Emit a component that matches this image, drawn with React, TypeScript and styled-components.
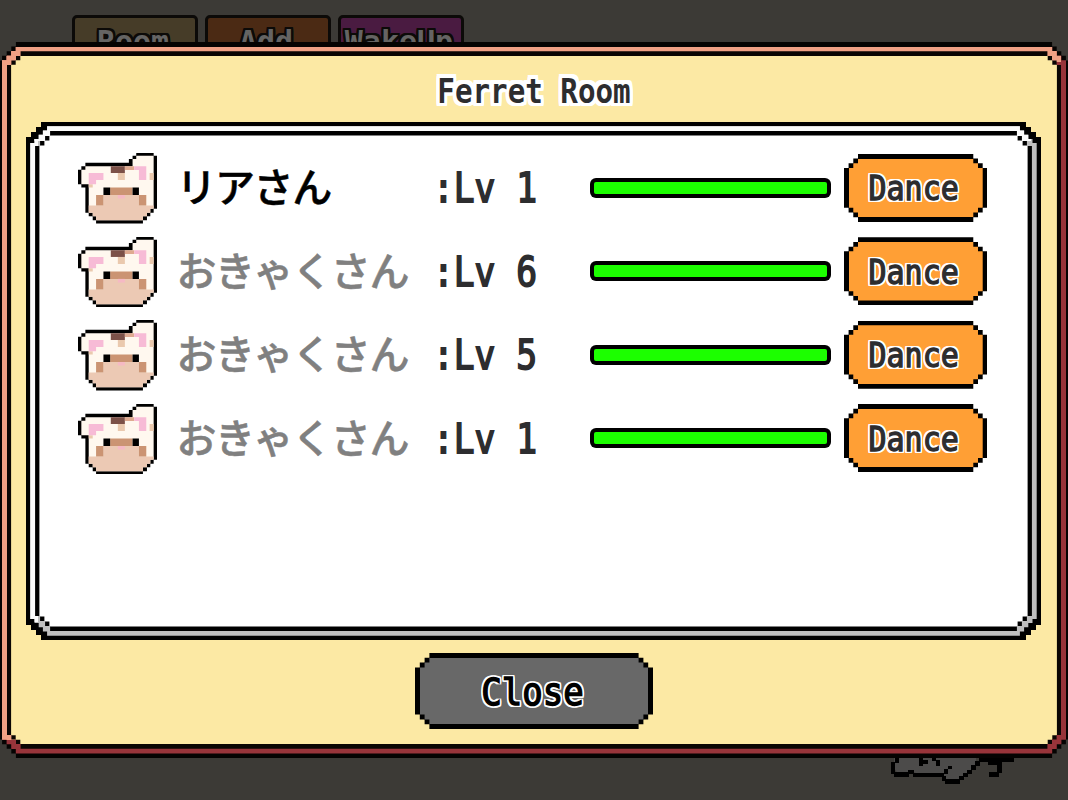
import React from "react";
import styled, { createGlobalStyle, css } from "styled-components";

type Ferret = {
    name: string;
    level: number;
    health: number;
    isGuest: boolean;
};

const ferrets: Ferret[] = [
    { name: "リアさん", level: 1, health: 100, isGuest: false },
    { name: "おきゃくさん", level: 6, health: 100, isGuest: true },
    { name: "おきゃくさん", level: 5, health: 100, isGuest: true },
    { name: "おきゃくさん", level: 1, health: 100, isGuest: true },
];

const tabs = [
    { label: "Room", color: "#463c28" },
    { label: "Add", color: "#4b2a14" },
    { label: "WakeUp", color: "#4a1b41" },
];

// Cuts the corners of a box in square steps, like a pixel art frame
function stepped(steps: number, unit: number) {
    const corner: [number, number][] = [];
    for (let i = 0; i < steps; i++) {
        corner.push([i * unit, (steps - i) * unit]);
        corner.push([(i + 1) * unit, (steps - i) * unit]);
    }
    corner.push([steps * unit, 0]);
    const back = [...corner].reverse();
    const far = (n: number) => `calc(100% - ${n}px)`;
    const points = [
        ...corner.map(([x, y]) => `${x}px ${y}px`),
        ...back.map(([x, y]) => `${far(x)} ${y}px`),
        ...corner.map(([x, y]) => `${far(x)} ${far(y)}`),
        ...back.map(([x, y]) => `${x}px ${far(y)}`),
    ];
    return `polygon(${points.join(", ")})`;
}

function outline(size: number, color: string) {
    const shadows: string[] = [];
    for (let x = -size; x <= size; x++) {
        for (let y = -size; y <= size; y++) {
            if (x || y) shadows.push(`${x}px ${y}px 0 ${color}`);
        }
    }
    return shadows.join(", ");
}

const FerretFace: React.FC = () => (
    <Face viewBox="24 24 236 212" preserveAspectRatio="none">
        <path d="M198 24H250V32H260V192H250V204H240V214H230V226H218V236H78V226H68V214H56V204H46V128H34V118H24V74H34V64H46V53H176V42H187V32H198Z" />
        <path
            fill="#fff8ef"
            d="M198 32H250V192H240V204H230V214H218V226H78V214H68V204H56V118H34V74H46V64H187V42H198Z"
        />
        <path fill="#7c5148" d="M122 64H164V84H122Z" />
        <path fill="#eac9ae" d="M143 84H164V105H143ZM238 84H250V105H238ZM56 118H68V128H56Z" />
        <path fill="#dfaa90" d="M164 64H192V75H164Z" />
        <path fill="#f7bbd6" d="M56 84H100V105H78V118H56ZM192 64H228V105H206V75H192Z" />
        <path
            fill="#ecc9b4"
            d="M100 150H206V182H250V192H240V204H230V214H218V226H78V214H68V204H56V182H100Z"
        />
        <path fill="#cb9473" d="M120 128H187V150H120ZM78 150H100V182H78ZM206 150H228V182H206Z" />
        <path fill="#f5b9c4" d="M143 150H164V161H143Z" />
        <path d="M100 128H120V150H100ZM187 128H206V150H187Z" />
    </Face>
);

const SleepingFerret: React.FC = () => (
    <Sleeper viewBox="0 0 124 30">
        <path
            fill="#4c4b4a"
            d="M4 0V10L8 16H18L20 13L26 15H52L56 22L64 24L74 20L86 7V0Z"
        />
        <path d="M5 0H9V5H5ZM1 4H5V16H1ZM4 14H19V19H4ZM18 12H24V16H18ZM23 15H54V19H23ZM29 0H33V8H29ZM33 2H38V6H33ZM42 0H46V3H42ZM46 2H50V8H46ZM52 18H56V23H52ZM55 21H70V26H55ZM69 18H74V22H69ZM73 15H78V19H73ZM77 12H82V16H77ZM81 7H86V12H81ZM85 3H90V8H85ZM89 0H124V4H89ZM98 0H112V7H98ZM107 6H112V15H107ZM99 14H109V19H99ZM54 11H58V16H54ZM58 8H62V11H58Z" />
    </Sleeper>
);

const App: React.FC = () => (
    <Screen>
        <GlobalStyle />
        <Tabs>
            {tabs.map((tab) => (
                <Tab key={tab.label} $color={tab.color}>
                    <TabLabel>{tab.label}</TabLabel>
                </Tab>
            ))}
        </Tabs>
        <SleepingFerret />
        <Modal>
            <ModalBevel>
                <ModalEdge>
                    <ModalBody>
                        <Title>Ferret Room</Title>
                        <Panel>
                            <PanelBevel>
                                <PanelEdge>
                                    <List>
                                        {ferrets.map((ferret, index) => (
                                            <Row key={index}>
                                                <FerretFace />
                                                <Name $isGuest={ferret.isGuest}>{ferret.name}</Name>
                                                <Level>:Lv {ferret.level}</Level>
                                                <Bar>
                                                    <BarFill style={{ width: `${ferret.health}%` }} />
                                                </Bar>
                                                <DanceButton>
                                                    <DanceFace>
                                                        <DanceLabel>Dance</DanceLabel>
                                                    </DanceFace>
                                                </DanceButton>
                                            </Row>
                                        ))}
                                    </List>
                                </PanelEdge>
                            </PanelBevel>
                        </Panel>
                        <CloseButton>
                            <CloseFace>
                                <CloseLabel>Close</CloseLabel>
                            </CloseFace>
                        </CloseButton>
                    </ModalBody>
                </ModalEdge>
            </ModalBevel>
        </Modal>
    </Screen>
);

export default App;

const GlobalStyle = createGlobalStyle`
    * {
        box-sizing: border-box;
    }
    body {
        margin: 0;
        background: #3c3a36;
    }
`;

const pixelText = css`
    font-family: "DejaVu Sans Mono", "Liberation Mono", monospace;
    line-height: 1;
    white-space: pre;
`;

const Screen = styled.div`
    position: relative;
    width: 1068px;
    height: 800px;
    overflow: hidden;
    background: #3c3a36;
`;

const Tabs = styled.div`
    display: flex;
    gap: 7px;
    padding: 15px 0 0 72px;
`;

const Tab = styled.div<{ $color: string }>`
    display: flex;
    justify-content: center;
    width: 126px;
    height: 50px;
    padding: 9px 4px 0 0;
    border: 3px solid #0c0a08;
    border-radius: 5px;
    background: ${({ $color }) => $color};
`;

const TabLabel = styled.span`
    ${pixelText}
    font-size: 30px;
    font-weight: bold;
    color: #656463;
    text-shadow: ${outline(2, "#0c0a08")};
`;

const Sleeper = styled.svg`
    position: absolute;
    left: 890px;
    top: 758px;
    width: 124px;
    height: 30px;
`;

const Modal = styled.div`
    position: absolute;
    left: -2.5px;
    top: 42px;
    width: 1073px;
    height: 716px;
    padding: 4.5px;
    background: #050302;
    clip-path: ${stepped(4, 4.6)};
`;

const ModalBevel = styled.div`
    height: 100%;
    padding: 4.8px;
    background:
        linear-gradient(#f0a084, #f0a084) 0 0 / calc(100% - 5px) 15px no-repeat,
        linear-gradient(#f0a084, #f0a084) 0 0 / 15px calc(100% - 14px) no-repeat,
        #98343a;
    clip-path: ${stepped(3, 4.6)};
`;

const ModalEdge = styled.div`
    height: 100%;
    padding: 4.3px;
    background: #0a0604;
    clip-path: ${stepped(3, 4.6)};
`;

const ModalBody = styled.div`
    display: flex;
    flex-direction: column;
    align-items: center;
    height: 100%;
    background: #fce9a4;
    clip-path: ${stepped(2, 4.6)};
`;

const Title = styled.div`
    ${pixelText}
    height: 66.4px;
    padding-top: 21px;
    font-size: 29.2px;
    font-weight: bold;
    color: #2d2d2f;
    text-shadow: ${outline(3, "#fff")};
    transform: scaleY(1.16);
`;

const Panel = styled.div`
    flex: none;
    width: 1015px;
    height: 518px;
    margin-right: 1px;
    padding: 4.3px;
    background: #000;
    clip-path: ${stepped(3, 5)};
`;

const PanelBevel = styled.div`
    height: 100%;
    padding: 4.8px;
    background:
        linear-gradient(#fbfbfb, #fbfbfb) 0 0 / calc(100% - 6px) 15px no-repeat,
        linear-gradient(#fbfbfb, #fbfbfb) 0 0 / 8px calc(100% - 14px) no-repeat,
        #bfbfbf;
    clip-path: ${stepped(4, 4.2)};
`;

const PanelEdge = styled.div`
    height: 100%;
    padding: 4.3px;
    background: #000;
    clip-path: ${stepped(3, 5)};
`;

const List = styled.div`
    height: 100%;
    padding: 18px 0 0 39px;
    background: #fff;
    clip-path: ${stepped(2, 5)};
`;

const Row = styled.div`
    display: flex;
    align-items: flex-start;
    height: 83.4px;
`;

const Face = styled.svg`
    flex: none;
    width: 79px;
    height: 70.5px;
`;

const Name = styled.div<{ $isGuest: boolean }>`
    width: 258.5px;
    margin: 12px 0 0 19px;
    font-family: "Noto Sans CJK JP", sans-serif;
    font-size: 40px;
    font-weight: 500;
    letter-spacing: -1.4px;
    line-height: 40px;
    white-space: nowrap;
    color: ${({ $isGuest }) => ($isGuest ? "#808080" : "#000")};
    -webkit-text-stroke: 0.5px currentColor;
`;

const Level = styled.div`
    ${pixelText}
    width: 155px;
    margin: 18px 2px 0 -2px;
    font-size: 34.6px;
    color: #2d2d2f;
    -webkit-text-stroke: 1.5px #2d2d2f;
    transform: scaleY(1.18);
`;

const Bar = styled.div`
    width: 241px;
    height: 20px;
    margin-top: 24.5px;
    padding: 4px;
    border-radius: 6px;
    background: #000;
`;

const BarFill = styled.div`
    height: 100%;
    border-radius: 2px;
    background: #1cff00;
`;

const buttonReset = css`
    display: block;
    flex: none;
    border: 0;
    background: #000;
    cursor: pointer;
`;

const buttonFace = css`
    display: flex;
    align-items: center;
    justify-content: center;
    height: 100%;
`;

const DanceButton = styled.button`
    ${buttonReset}
    width: 143.5px;
    height: 68px;
    margin: 0.5px 0 0 13px;
    padding: 4.7px;
    clip-path: ${stepped(3, 4.7)};
`;

const DanceFace = styled.span`
    ${buttonFace}
    padding: 3px 4px 0 0;
    background: #ff9f35;
    clip-path: ${stepped(2, 4.7)};
`;

const DanceLabel = styled.span`
    ${pixelText}
    font-size: 30px;
    color: #2d2d2f;
    -webkit-text-stroke: 1.2px #2d2d2f;
    text-shadow: ${outline(2, "#fff")};
    transform: scaleY(1.12);
`;

const CloseButton = styled.button`
    ${buttonReset}
    width: 238px;
    height: 76px;
    margin-top: 13px;
    padding: 4.8px;
    clip-path: ${stepped(3, 4.8)};
`;

const CloseFace = styled.span`
    ${buttonFace}
    padding: 2px 3px 0 0;
    background: #686868;
    clip-path: ${stepped(2, 4.8)};
`;

const CloseLabel = styled.span`
    ${pixelText}
    font-size: 34px;
    color: #000;
    -webkit-text-stroke: 1.3px #000;
    text-shadow: ${outline(2, "#fff")};
    transform: scaleY(1.1);
`;
